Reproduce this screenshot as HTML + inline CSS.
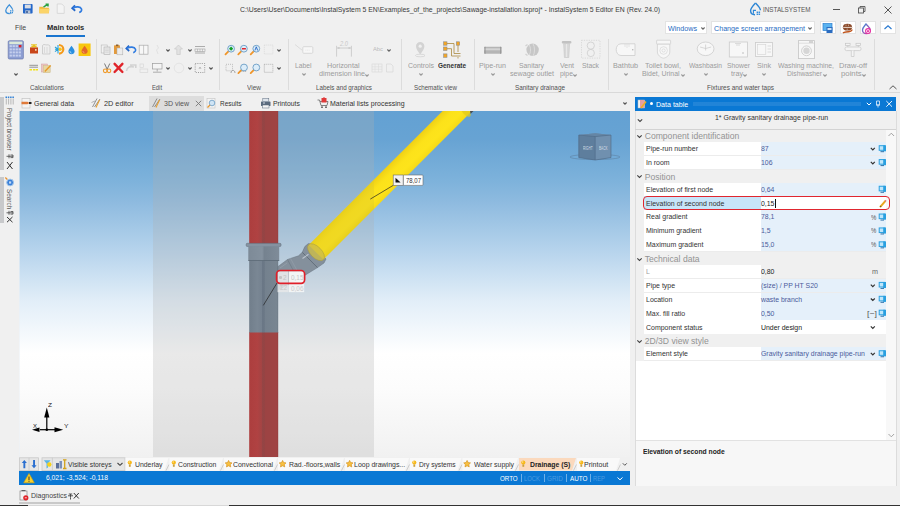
<!DOCTYPE html>
<html><head><meta charset="utf-8"><style>
html,body{margin:0;padding:0;}
body{width:900px;height:506px;overflow:hidden;position:relative;background:#f0f0f0;font-family:"Liberation Sans", sans-serif;}
.t{position:absolute;white-space:pre;transform-origin:0 50%;}
.a{position:absolute;}
svg{position:absolute;overflow:visible;}
</style></head><body>
<div class="t" style="left:239.60px;top:5.63px;font-size:8px;line-height:8px;color:#3a3a3a;transform:scaleX(0.856);">C:\Users\User\Documents\InstalSystem 5 EN\Examples_of_the_projects\Sawage-installation.isproj* - InstalSystem 5 Editor EN (Rev. 24.0)</div><div class="t" style="left:763.20px;top:5.97px;font-size:7px;line-height:7px;color:#555;transform:scaleX(0.900);">INSTALSYSTEM</div><div class="a" style="left:833px;top:9px;width:7px;height:0.9px;background:#555"></div><svg style="left:858px;top:5.5px" width="8" height="8"><rect x="0.5" y="2" width="5" height="5" fill="none" stroke="#555" stroke-width="0.9"/><path d="M2 2V0.5H7V5.5H5.5" fill="none" stroke="#555" stroke-width="0.9"/></svg><svg style="left:883.5px;top:5.5px" width="8" height="8"><path d="M0.5 0.5L7.5 7.5M7.5 0.5L0.5 7.5" stroke="#444" stroke-width="0.9"/></svg><div class="t" style="left:14.90px;top:23.63px;font-size:8px;line-height:8px;color:#444;transform:scaleX(0.861);">File</div><div class="t" style="left:46.90px;top:23.63px;font-size:8px;line-height:8px;color:#2a2a2a;font-weight:700;transform:scaleX(0.943);">Main tools</div><div class="a" style="left:46px;top:34.5px;width:39px;height:2px;background:#1a75cf"></div><div class="a" style="left:665px;top:21px;width:42px;height:13px;background:#fff;border:1px solid #e3e3e3;box-sizing:border-box"></div><div class="t" style="left:668.30px;top:24.53px;font-size:8px;line-height:8px;color:#1f6cc2;transform:scaleX(0.894);">Windows</div><div class="a" style="left:711px;top:21px;width:104px;height:13px;background:#fff;border:1px solid #e3e3e3;box-sizing:border-box"></div><div class="t" style="left:714.00px;top:24.53px;font-size:8px;line-height:8px;color:#1f6cc2;transform:scaleX(0.894);">Change screen arrangement</div><div class="a" style="left:820px;top:21px;width:15.5px;height:13px;background:#fff;border:1px solid #e3e3e3;box-sizing:border-box"></div><div class="a" style="left:840px;top:21px;width:15.5px;height:13px;background:#fff;border:1px solid #e3e3e3;box-sizing:border-box"></div><div class="a" style="left:860px;top:21px;width:15.5px;height:13px;background:#fff;border:1px solid #e3e3e3;box-sizing:border-box"></div><div class="a" style="left:880px;top:21px;width:15.5px;height:13px;background:#fff;border:1px solid #e3e3e3;box-sizing:border-box"></div><svg style="left:700.5px;top:27.2px" width="4" height="3"><path d="M0.4 0.5L2 2.1L3.6 0.5" fill="none" stroke="#666" stroke-width="1.15"/></svg><svg style="left:808.0px;top:27.2px" width="4" height="3"><path d="M0.4 0.5L2 2.1L3.6 0.5" fill="none" stroke="#666" stroke-width="1.15"/></svg><svg style="left:884px;top:25px" width="8" height="5"><path d="M0.5 4L4 0.8L7.5 4" fill="none" stroke="#2a7ad0" stroke-width="1.2"/></svg><div class="a" style="left:0;top:92px;width:900px;height:1px;background:#d9d9d9"></div><div class="a" style="left:95.5px;top:39px;width:1px;height:51px;background:#dcdcdc"></div><div class="a" style="left:219.3px;top:39px;width:1px;height:51px;background:#dcdcdc"></div><div class="a" style="left:288.0px;top:39px;width:1px;height:51px;background:#dcdcdc"></div><div class="a" style="left:401.0px;top:39px;width:1px;height:51px;background:#dcdcdc"></div><div class="a" style="left:473.7px;top:39px;width:1px;height:51px;background:#dcdcdc"></div><div class="a" style="left:607.5px;top:39px;width:1px;height:51px;background:#dcdcdc"></div><div class="a" style="left:874.0px;top:39px;width:1px;height:51px;background:#dcdcdc"></div><div class="t" style="left:30.00px;top:83.95px;font-size:7.5px;line-height:7.5px;color:#505050;transform:scaleX(0.832);">Calculations</div><div class="t" style="left:152.00px;top:83.95px;font-size:7.5px;line-height:7.5px;color:#505050;transform:scaleX(0.773);">Edit</div><div class="t" style="left:247.00px;top:83.95px;font-size:7.5px;line-height:7.5px;color:#505050;transform:scaleX(0.868);">View</div><div class="t" style="left:316.00px;top:83.95px;font-size:7.5px;line-height:7.5px;color:#505050;transform:scaleX(0.834);">Labels and graphics</div><div class="t" style="left:414.00px;top:83.95px;font-size:7.5px;line-height:7.5px;color:#505050;transform:scaleX(0.825);">Schematic view</div><div class="t" style="left:515.00px;top:83.95px;font-size:7.5px;line-height:7.5px;color:#505050;transform:scaleX(0.850);">Sanitary drainage</div><div class="t" style="left:707.00px;top:83.95px;font-size:7.5px;line-height:7.5px;color:#505050;transform:scaleX(0.859);">Fixtures and water taps</div><div class="t" style="left:295.25px;top:61.65px;font-size:7.5px;line-height:7.5px;color:#9c9c9c;transform:scaleX(0.899);">Label</div><svg style="left:302.0px;top:73.0px" width="4" height="3"><path d="M0.4 0.5L2 2.1L3.6 0.5" fill="none" stroke="#999" stroke-width="1.15"/></svg><div class="t" style="left:327.45px;top:61.65px;font-size:7.5px;line-height:7.5px;color:#9c9c9c;transform:scaleX(0.963);">Horizontal</div><div class="t" style="left:319.00px;top:69.95px;font-size:7.5px;line-height:7.5px;color:#9c9c9c;transform:scaleX(0.959);">dimension line</div><svg style="left:365.0px;top:74.0px" width="4" height="3"><path d="M0.4 0.5L2 2.1L3.6 0.5" fill="none" stroke="#999" stroke-width="1.15"/></svg><div class="t" style="left:408.00px;top:61.65px;font-size:7.5px;line-height:7.5px;color:#9c9c9c;transform:scaleX(0.931);">Controls</div><svg style="left:419.0px;top:73.0px" width="4" height="3"><path d="M0.4 0.5L2 2.1L3.6 0.5" fill="none" stroke="#999" stroke-width="1.15"/></svg><div class="t" style="left:438.00px;top:61.65px;font-size:7.5px;line-height:7.5px;color:#333;font-weight:700;transform:scaleX(0.861);">Generate</div><div class="t" style="left:479.00px;top:61.65px;font-size:7.5px;line-height:7.5px;color:#9c9c9c;transform:scaleX(0.952);">Pipe-run</div><svg style="left:490.5px;top:73.0px" width="4" height="3"><path d="M0.4 0.5L2 2.1L3.6 0.5" fill="none" stroke="#999" stroke-width="1.15"/></svg><div class="t" style="left:519.00px;top:61.65px;font-size:7.5px;line-height:7.5px;color:#9c9c9c;transform:scaleX(0.909);">Sanitary</div><div class="t" style="left:510.00px;top:69.95px;font-size:7.5px;line-height:7.5px;color:#9c9c9c;transform:scaleX(0.950);">sewage outlet</div><div class="t" style="left:560.00px;top:61.65px;font-size:7.5px;line-height:7.5px;color:#9c9c9c;transform:scaleX(0.932);">Vent</div><div class="t" style="left:559.50px;top:69.95px;font-size:7.5px;line-height:7.5px;color:#9c9c9c;transform:scaleX(0.916);">pipe</div><svg style="left:573.0px;top:74.0px" width="4" height="3"><path d="M0.4 0.5L2 2.1L3.6 0.5" fill="none" stroke="#999" stroke-width="1.15"/></svg><div class="t" style="left:582.00px;top:61.65px;font-size:7.5px;line-height:7.5px;color:#9c9c9c;transform:scaleX(0.906);">Stack</div><div class="t" style="left:613.00px;top:61.65px;font-size:7.5px;line-height:7.5px;color:#9c9c9c;transform:scaleX(0.967);">Bathtub</div><svg style="left:623.5px;top:73.0px" width="4" height="3"><path d="M0.4 0.5L2 2.1L3.6 0.5" fill="none" stroke="#999" stroke-width="1.15"/></svg><div class="t" style="left:645.00px;top:61.65px;font-size:7.5px;line-height:7.5px;color:#9c9c9c;transform:scaleX(0.970);">Toilet bowl,</div><div class="t" style="left:641.75px;top:69.95px;font-size:7.5px;line-height:7.5px;color:#9c9c9c;transform:scaleX(0.918);">Bidet, Urinal</div><svg style="left:681.0px;top:74.0px" width="4" height="3"><path d="M0.4 0.5L2 2.1L3.6 0.5" fill="none" stroke="#999" stroke-width="1.15"/></svg><div class="t" style="left:689.00px;top:61.65px;font-size:7.5px;line-height:7.5px;color:#9c9c9c;transform:scaleX(0.896);">Washbasin</div><svg style="left:703.5px;top:73.0px" width="4" height="3"><path d="M0.4 0.5L2 2.1L3.6 0.5" fill="none" stroke="#999" stroke-width="1.15"/></svg><div class="t" style="left:727.00px;top:61.65px;font-size:7.5px;line-height:7.5px;color:#9c9c9c;transform:scaleX(0.904);">Shower</div><div class="t" style="left:730.50px;top:69.95px;font-size:7.5px;line-height:7.5px;color:#9c9c9c;transform:scaleX(0.959);">tray</div><svg style="left:743.0px;top:74.0px" width="4" height="3"><path d="M0.4 0.5L2 2.1L3.6 0.5" fill="none" stroke="#999" stroke-width="1.15"/></svg><div class="t" style="left:757.00px;top:61.65px;font-size:7.5px;line-height:7.5px;color:#9c9c9c;transform:scaleX(0.959);">Sink</div><svg style="left:762.0px;top:73.0px" width="4" height="3"><path d="M0.4 0.5L2 2.1L3.6 0.5" fill="none" stroke="#999" stroke-width="1.15"/></svg><div class="t" style="left:778.00px;top:61.65px;font-size:7.5px;line-height:7.5px;color:#9c9c9c;transform:scaleX(0.912);">Washing machine,</div><div class="t" style="left:786.70px;top:69.95px;font-size:7.5px;line-height:7.5px;color:#9c9c9c;transform:scaleX(0.893);">Dishwasher</div><svg style="left:823.0px;top:74.0px" width="4" height="3"><path d="M0.4 0.5L2 2.1L3.6 0.5" fill="none" stroke="#999" stroke-width="1.15"/></svg><div class="t" style="left:839.00px;top:61.65px;font-size:7.5px;line-height:7.5px;color:#9c9c9c;transform:scaleX(0.993);">Draw-off</div><div class="t" style="left:840.95px;top:69.95px;font-size:7.5px;line-height:7.5px;color:#9c9c9c;transform:scaleX(1.034);">points</div><svg style="left:862.0px;top:74.0px" width="4" height="3"><path d="M0.4 0.5L2 2.1L3.6 0.5" fill="none" stroke="#999" stroke-width="1.15"/></svg><div class="t" style="left:373.00px;top:46.42px;font-size:6px;line-height:6px;color:#bbb;transform:scaleX(0.967);">Abc</div><svg style="left:387.0px;top:48.5px" width="4" height="3"><path d="M0.4 0.5L2 2.1L3.6 0.5" fill="none" stroke="#666" stroke-width="1.15"/></svg><svg style="left:14.0px;top:73.0px" width="4" height="3"><path d="M0.4 0.5L2 2.1L3.6 0.5" fill="none" stroke="#555" stroke-width="1.15"/></svg><svg style="left:889px;top:85px" width="8" height="5"><path d="M0.5 4L4 0.8L7.5 4" fill="none" stroke="#555" stroke-width="1"/></svg><div class="a" style="left:0;top:96.5px;width:3.5px;height:73px;background:#c8c9cb"></div><div class="a" style="left:0;top:177px;width:3.5px;height:46px;background:#c8c9cb"></div><div class="a" style="left:149px;top:96px;width:55px;height:15px;background:#dddddd"></div><div class="t" style="left:33.90px;top:100.23px;font-size:8px;line-height:8px;color:#333;transform:scaleX(0.865);">General data</div><div class="t" style="left:104.30px;top:100.23px;font-size:8px;line-height:8px;color:#333;transform:scaleX(0.912);">2D editor</div><div class="t" style="left:164.30px;top:100.23px;font-size:8px;line-height:8px;color:#555;transform:scaleX(0.882);">3D view</div><svg style="left:195px;top:100.3px" width="7" height="7"><path d="M0.8 0.8L6.2 6.2M6.2 0.8L0.8 6.2" stroke="#777" stroke-width="0.9"/></svg><div class="t" style="left:219.60px;top:100.23px;font-size:8px;line-height:8px;color:#333;transform:scaleX(0.802);">Results</div><div class="t" style="left:272.60px;top:100.23px;font-size:8px;line-height:8px;color:#333;transform:scaleX(0.852);">Printouts</div><div class="t" style="left:329.60px;top:100.23px;font-size:8px;line-height:8px;color:#333;transform:scaleX(0.874);">Material lists processing</div><svg style="left:623.0px;top:102.0px" width="4" height="3"><path d="M0.4 0.5L2 2.1L3.6 0.5" fill="none" stroke="#555" stroke-width="1.15"/></svg><div class="a" style="left:19px;top:111px;width:611px;height:346px;background:linear-gradient(to bottom,#63a1d3 0%,#67a3d3 8%,#7db2db 20%,#8dbadf 26%,#b5d3ec 40%,#e2eef8 55%,#ffffff 70%,#fcfcfc 80%,#f1f1f1 100%)"></div><div class="a" style="left:19px;top:111px;width:1px;height:346px;background:rgba(235,240,245,0.6)"></div><div class="a" style="left:153px;top:111px;width:221px;height:346px;background:rgba(175,175,175,0.28)"></div><div class="a" style="left:19px;top:457.5px;width:611px;height:13.5px;background:#f0f0f0"></div><div class="a" style="left:19px;top:471px;width:611px;height:14px;background:#0a78d4"></div><div class="t" style="left:46.00px;top:474.23px;font-size:8px;line-height:8px;color:#fff;transform:scaleX(0.841);">6,021; -3,524; -0,118</div><div class="t" style="left:500.00px;top:474.65px;font-size:7.5px;line-height:7.5px;color:#fff;transform:scaleX(0.827);">ORTO</div><div class="t" style="left:524.00px;top:474.65px;font-size:7.5px;line-height:7.5px;color:#4d9be0;transform:scaleX(0.783);">LOCK</div><div class="t" style="left:547.00px;top:474.65px;font-size:7.5px;line-height:7.5px;color:#4d9be0;transform:scaleX(0.853);">GRID</div><div class="t" style="left:569.50px;top:474.65px;font-size:7.5px;line-height:7.5px;color:#fff;transform:scaleX(0.845);">AUTO</div><div class="t" style="left:593.00px;top:474.65px;font-size:7.5px;line-height:7.5px;color:#4d9be0;transform:scaleX(0.778);">REP</div><div class="a" style="left:521px;top:473.5px;width:1px;height:8px;background:#6fb0e8"></div><div class="a" style="left:543.5px;top:473.5px;width:1px;height:8px;background:#6fb0e8"></div><div class="a" style="left:566px;top:473.5px;width:1px;height:8px;background:#6fb0e8"></div><div class="a" style="left:590px;top:473.5px;width:1px;height:8px;background:#6fb0e8"></div><svg style="left:616.5px;top:476.8px" width="6" height="4"><path d="M0.5 0.5L3 2.8L5.5 0.5" fill="none" stroke="#fff" stroke-width="1"/></svg><div class="t" style="left:31.00px;top:491.73px;font-size:8px;line-height:8px;color:#444;transform:scaleX(0.870);">Diagnostics</div><div class="a" style="left:19px;top:501.5px;width:61px;height:2.5px;background:#c9c9c9"></div><div class="a" style="left:229px;top:505px;width:671px;height:1px;background:#333"></div><div class="a" style="left:0;top:505px;width:229px;height:1px;background:#d8d8d8"></div><div class="a" style="left:0;top:505px;width:28px;height:1px;background:#333"></div><div class="a" style="left:635px;top:97px;width:261px;height:14px;background:#0a78d4"></div><div class="t" style="left:655.70px;top:101.03px;font-size:8px;line-height:8px;color:#fff;transform:scaleX(0.883);">Data table</div><div class="a" style="left:649.5px;top:102px;width:3px;height:3px;border-radius:50%;background:#fff"></div><div class="a" style="left:693px;top:102px;width:168px;height:4px;background-image:radial-gradient(circle,#3b92dc 0.5px,transparent 0.9px);background-size:2px 2px"></div><div class="a" style="left:634.5px;top:111px;width:262px;height:375px;border:1px solid #dcdcdc;border-top:none;box-sizing:border-box;background:#f0f0f0"></div><div class="t" style="left:714.80px;top:114.23px;font-size:8px;line-height:8px;color:#333;transform:scaleX(0.869);">1* Gravity sanitary drainage pipe-run</div><div class="a" style="left:635px;top:129px;width:261px;height:1px;background:#d5d5d5"></div><div class="a" style="left:635.5px;top:130px;width:250.5px;height:310px;background:#ffffff"></div><div class="a" style="left:886px;top:130px;width:10px;height:310px;background:#f8f8f8"></div><div class="a" style="left:635.5px;top:440px;width:260.5px;height:46px;background:#f7f7f7;border-top:1px solid #e2e2e2;box-sizing:border-box"></div><div class="t" style="left:642.50px;top:447.73px;font-size:8px;line-height:8px;color:#222;font-weight:700;transform:scaleX(0.843);">Elevation of second node</div><div class="a" style="left:635.5px;top:129.20px;width:250.5px;height:12.75px;background:#f0f0f0"></div><div class="t" style="left:644.70px;top:132.02px;font-size:8.6px;line-height:8.6px;color:#939393;">Component identification</div><svg style="left:637px;top:134.70px" width="5" height="3"><path d="M0.3 0.3L2.5 2.5L4.7 0.3" fill="none" stroke="#444" stroke-width="1.1"/></svg><div class="a" style="left:635.5px;top:141.95px;width:8px;height:13.90px;background:#f0f0f0"></div><div class="a" style="left:643.6px;top:141.95px;width:117px;height:13.90px;background:#ffffff"></div><div class="a" style="left:760.5px;top:141.95px;width:125.5px;height:13.90px;background:#e5f0fa"></div><div class="a" style="left:643.6px;top:155.25px;width:242.4px;height:0.6px;background:#ececec"></div><div class="t" style="left:646.00px;top:145.10px;font-size:7.5px;line-height:7.5px;color:#333;transform:scaleX(0.930);">Pipe-run number</div><div class="t" style="left:761.00px;top:145.10px;font-size:7.5px;line-height:7.5px;color:#4b5b9a;transform:scaleX(0.920);">87</div><div class="a" style="left:635.5px;top:155.85px;width:8px;height:13.90px;background:#f0f0f0"></div><div class="a" style="left:643.6px;top:155.85px;width:117px;height:13.90px;background:#ffffff"></div><div class="a" style="left:760.5px;top:155.85px;width:125.5px;height:13.90px;background:#e5f0fa"></div><div class="a" style="left:643.6px;top:169.15px;width:242.4px;height:0.6px;background:#ececec"></div><div class="t" style="left:646.00px;top:159.00px;font-size:7.5px;line-height:7.5px;color:#333;transform:scaleX(0.930);">In room</div><div class="t" style="left:761.00px;top:159.00px;font-size:7.5px;line-height:7.5px;color:#4b5b9a;transform:scaleX(0.920);">106</div><div class="a" style="left:635.5px;top:169.75px;width:250.5px;height:12.75px;background:#f0f0f0"></div><div class="t" style="left:644.70px;top:172.57px;font-size:8.6px;line-height:8.6px;color:#939393;">Position</div><svg style="left:637px;top:175.25px" width="5" height="3"><path d="M0.3 0.3L2.5 2.5L4.7 0.3" fill="none" stroke="#444" stroke-width="1.1"/></svg><div class="a" style="left:635.5px;top:182.50px;width:8px;height:13.90px;background:#f0f0f0"></div><div class="a" style="left:643.6px;top:182.50px;width:117px;height:13.90px;background:#ffffff"></div><div class="a" style="left:760.5px;top:182.50px;width:125.5px;height:13.90px;background:#e5f0fa"></div><div class="a" style="left:643.6px;top:195.80px;width:242.4px;height:0.6px;background:#ececec"></div><div class="t" style="left:646.00px;top:185.65px;font-size:7.5px;line-height:7.5px;color:#333;transform:scaleX(0.930);">Elevation of first node</div><div class="t" style="left:761.00px;top:185.65px;font-size:7.5px;line-height:7.5px;color:#4b5b9a;transform:scaleX(0.920);">0,64</div><div class="a" style="left:635.5px;top:196.40px;width:8px;height:13.90px;background:#f0f0f0"></div><div class="a" style="left:643.6px;top:196.40px;width:117px;height:13.90px;background:#c7e5f9"></div><div class="a" style="left:760.5px;top:196.40px;width:125.5px;height:13.90px;background:#ffffff"></div><div class="a" style="left:643.6px;top:209.70px;width:242.4px;height:0.6px;background:#ececec"></div><div class="t" style="left:646.00px;top:199.55px;font-size:7.5px;line-height:7.5px;color:#333;transform:scaleX(0.930);">Elevation of second node</div><div class="t" style="left:761.00px;top:199.55px;font-size:7.5px;line-height:7.5px;color:#222;transform:scaleX(0.920);">0,15</div><div class="a" style="left:635.5px;top:210.30px;width:8px;height:13.90px;background:#f0f0f0"></div><div class="a" style="left:643.6px;top:210.30px;width:117px;height:13.90px;background:#ffffff"></div><div class="a" style="left:760.5px;top:210.30px;width:125.5px;height:13.90px;background:#e5f0fa"></div><div class="a" style="left:643.6px;top:223.60px;width:242.4px;height:0.6px;background:#ececec"></div><div class="t" style="left:646.00px;top:213.45px;font-size:7.5px;line-height:7.5px;color:#333;transform:scaleX(0.930);">Real gradient</div><div class="t" style="left:761.00px;top:213.45px;font-size:7.5px;line-height:7.5px;color:#4b5b9a;transform:scaleX(0.920);">78,1</div><div class="a" style="left:635.5px;top:224.20px;width:8px;height:13.90px;background:#f0f0f0"></div><div class="a" style="left:643.6px;top:224.20px;width:117px;height:13.90px;background:#ffffff"></div><div class="a" style="left:760.5px;top:224.20px;width:125.5px;height:13.90px;background:#e5f0fa"></div><div class="a" style="left:643.6px;top:237.50px;width:242.4px;height:0.6px;background:#ececec"></div><div class="t" style="left:646.00px;top:227.35px;font-size:7.5px;line-height:7.5px;color:#333;transform:scaleX(0.930);">Minimum gradient</div><div class="t" style="left:761.00px;top:227.35px;font-size:7.5px;line-height:7.5px;color:#4b5b9a;transform:scaleX(0.920);">1,5</div><div class="a" style="left:635.5px;top:238.10px;width:8px;height:13.90px;background:#f0f0f0"></div><div class="a" style="left:643.6px;top:238.10px;width:117px;height:13.90px;background:#ffffff"></div><div class="a" style="left:760.5px;top:238.10px;width:125.5px;height:13.90px;background:#e5f0fa"></div><div class="a" style="left:643.6px;top:251.40px;width:242.4px;height:0.6px;background:#ececec"></div><div class="t" style="left:646.00px;top:241.25px;font-size:7.5px;line-height:7.5px;color:#333;transform:scaleX(0.930);">Maximum gradient</div><div class="t" style="left:761.00px;top:241.25px;font-size:7.5px;line-height:7.5px;color:#4b5b9a;transform:scaleX(0.920);">15,0</div><div class="a" style="left:635.5px;top:252.00px;width:250.5px;height:12.75px;background:#f0f0f0"></div><div class="t" style="left:644.70px;top:254.82px;font-size:8.6px;line-height:8.6px;color:#939393;">Technical data</div><svg style="left:637px;top:257.50px" width="5" height="3"><path d="M0.3 0.3L2.5 2.5L4.7 0.3" fill="none" stroke="#444" stroke-width="1.1"/></svg><div class="a" style="left:635.5px;top:264.75px;width:8px;height:13.90px;background:#f0f0f0"></div><div class="a" style="left:643.6px;top:264.75px;width:117px;height:13.90px;background:#ffffff"></div><div class="a" style="left:760.5px;top:264.75px;width:125.5px;height:13.90px;background:#f0f0f0"></div><div class="a" style="left:643.6px;top:278.05px;width:242.4px;height:0.6px;background:#ececec"></div><div class="t" style="left:646.00px;top:267.90px;font-size:7.5px;line-height:7.5px;color:#a0a0a0;transform:scaleX(0.930);">L</div><div class="t" style="left:761.00px;top:267.90px;font-size:7.5px;line-height:7.5px;color:#222;transform:scaleX(0.920);">0,80</div><div class="a" style="left:635.5px;top:278.65px;width:8px;height:13.90px;background:#f0f0f0"></div><div class="a" style="left:643.6px;top:278.65px;width:117px;height:13.90px;background:#ffffff"></div><div class="a" style="left:760.5px;top:278.65px;width:125.5px;height:13.90px;background:#e5f0fa"></div><div class="a" style="left:643.6px;top:291.95px;width:242.4px;height:0.6px;background:#ececec"></div><div class="t" style="left:646.00px;top:281.80px;font-size:7.5px;line-height:7.5px;color:#333;transform:scaleX(0.930);">Pipe type</div><div class="t" style="left:761.00px;top:281.80px;font-size:7.5px;line-height:7.5px;color:#4b5b9a;transform:scaleX(0.920);">(size) / PP HT S20</div><div class="a" style="left:635.5px;top:292.55px;width:8px;height:13.90px;background:#f0f0f0"></div><div class="a" style="left:643.6px;top:292.55px;width:117px;height:13.90px;background:#ffffff"></div><div class="a" style="left:760.5px;top:292.55px;width:125.5px;height:13.90px;background:#e5f0fa"></div><div class="a" style="left:643.6px;top:305.85px;width:242.4px;height:0.6px;background:#ececec"></div><div class="t" style="left:646.00px;top:295.70px;font-size:7.5px;line-height:7.5px;color:#333;transform:scaleX(0.930);">Location</div><div class="t" style="left:761.00px;top:295.70px;font-size:7.5px;line-height:7.5px;color:#4b5b9a;transform:scaleX(0.920);">waste branch</div><div class="a" style="left:635.5px;top:306.45px;width:8px;height:13.90px;background:#f0f0f0"></div><div class="a" style="left:643.6px;top:306.45px;width:117px;height:13.90px;background:#ffffff"></div><div class="a" style="left:760.5px;top:306.45px;width:125.5px;height:13.90px;background:#e5f0fa"></div><div class="a" style="left:643.6px;top:319.75px;width:242.4px;height:0.6px;background:#ececec"></div><div class="t" style="left:646.00px;top:309.60px;font-size:7.5px;line-height:7.5px;color:#333;transform:scaleX(0.930);">Max. fill ratio</div><div class="t" style="left:761.00px;top:309.60px;font-size:7.5px;line-height:7.5px;color:#4b5b9a;transform:scaleX(0.920);">0,50</div><div class="a" style="left:635.5px;top:320.35px;width:8px;height:13.90px;background:#f0f0f0"></div><div class="a" style="left:643.6px;top:320.35px;width:117px;height:13.90px;background:#ffffff"></div><div class="a" style="left:760.5px;top:320.35px;width:125.5px;height:13.90px;background:#ffffff"></div><div class="a" style="left:643.6px;top:333.65px;width:242.4px;height:0.6px;background:#ececec"></div><div class="t" style="left:646.00px;top:323.50px;font-size:7.5px;line-height:7.5px;color:#333;transform:scaleX(0.930);">Component status</div><div class="t" style="left:761.00px;top:323.50px;font-size:7.5px;line-height:7.5px;color:#222;transform:scaleX(0.920);">Under design</div><div class="a" style="left:635.5px;top:334.25px;width:250.5px;height:12.75px;background:#f0f0f0"></div><div class="t" style="left:644.70px;top:337.07px;font-size:8.6px;line-height:8.6px;color:#939393;">2D/3D view style</div><svg style="left:637px;top:339.75px" width="5" height="3"><path d="M0.3 0.3L2.5 2.5L4.7 0.3" fill="none" stroke="#444" stroke-width="1.1"/></svg><div class="a" style="left:635.5px;top:347.00px;width:8px;height:13.90px;background:#f0f0f0"></div><div class="a" style="left:643.6px;top:347.00px;width:117px;height:13.90px;background:#ffffff"></div><div class="a" style="left:760.5px;top:347.00px;width:125.5px;height:13.90px;background:#e5f0fa"></div><div class="a" style="left:643.6px;top:360.30px;width:242.4px;height:0.6px;background:#ececec"></div><div class="t" style="left:646.00px;top:350.15px;font-size:7.5px;line-height:7.5px;color:#333;transform:scaleX(0.930);">Element style</div><div class="t" style="left:761.00px;top:350.15px;font-size:7.5px;line-height:7.5px;color:#4b5b9a;transform:scaleX(0.920);">Gravity sanitary drainage pipe-run</div><div class="a" style="left:635px;top:128.7px;width:261px;height:1px;background:#d3d3d3"></div><div class="a" style="left:642.5px;top:195.5px;width:247px;height:14.5px;border:1.6px solid #e0262f;border-radius:4px;box-sizing:border-box"></div><svg style="left:0;top:0" width="900" height="506" viewBox="0 0 900 506">
<defs>
<clipPath id="vp"><rect x="19" y="111" width="611" height="346"/></clipPath>
<clipPath id="band"><rect x="153" y="111" width="221" height="346"/></clipPath>
<clipPath id="outb"><rect x="374" y="100" width="300" height="360"/></clipPath>
<linearGradient id="red" x1="0" x2="1" y1="0" y2="0">
<stop offset="0" stop-color="#ac3e3e"/><stop offset="0.28" stop-color="#b04242"/><stop offset="0.43" stop-color="#a34444"/><stop offset="0.45" stop-color="#954545"/><stop offset="0.52" stop-color="#944444"/><stop offset="0.56" stop-color="#9c4343"/><stop offset="0.94" stop-color="#a04343"/><stop offset="1" stop-color="#963f3f"/>
</linearGradient>
<linearGradient id="gray" x1="0" x2="1" y1="0" y2="0">
<stop offset="0" stop-color="#717e8b"/><stop offset="0.28" stop-color="#7a8794"/><stop offset="0.43" stop-color="#758290"/><stop offset="0.45" stop-color="#6a7786"/><stop offset="0.52" stop-color="#6b7886"/><stop offset="0.56" stop-color="#74818e"/><stop offset="0.94" stop-color="#788591"/><stop offset="1" stop-color="#6f7c88"/>
</linearGradient>
<linearGradient id="grayl" x1="0" x2="1" y1="0" y2="0">
<stop offset="0" stop-color="#7d8a97"/><stop offset="0.45" stop-color="#84919e"/><stop offset="0.52" stop-color="#75828f"/><stop offset="1" stop-color="#7f8c99"/>
</linearGradient>
<linearGradient id="yel" gradientUnits="userSpaceOnUse" x1="442.6" y1="111" x2="457.3" y2="125.7">
<stop offset="0" stop-color="#efd016"/><stop offset="0.35" stop-color="#fce21a"/><stop offset="0.7" stop-color="#fde41b"/><stop offset="1" stop-color="#f6da16"/>
</linearGradient>
<linearGradient id="yeld" gradientUnits="userSpaceOnUse" x1="442.6" y1="111" x2="457.3" y2="125.7">
<stop offset="0" stop-color="#e8cf1c"/><stop offset="0.35" stop-color="#f0d820"/><stop offset="0.7" stop-color="#f0d922"/><stop offset="1" stop-color="#e8d01c"/>
</linearGradient>
</defs>
<g clip-path="url(#vp)">
<!-- red pipe -->
<rect x="249.2" y="100" width="29" height="144" fill="url(#red)"/>
<rect x="249.2" y="332" width="29" height="130" fill="url(#red)"/>
<!-- gray main pipe -->
<rect x="249.2" y="260" width="29" height="72.5" fill="url(#gray)"/>
<!-- branch fitting -->
<path d="M278 266.5 L287.5 259.5 L290.5 258.4 L298.5 255.8 L302.3 252.3 L304.8 246.6 L308.3 243.6 L312 244.2 L326 259 L324 263 L317.5 267.6 L305 275.2 L290 283.5 L278 290 Z" fill="#84909c" stroke="#66727e" stroke-width="0.5"/>
<path d="M302.3 252.3 L317.5 267.6" stroke="#5f6b77" stroke-width="0.9" fill="none"/>
<path d="M287.5 259.5 L296.5 276.5" stroke="#6c7884" stroke-width="0.7" fill="none"/>
<path d="M290.5 258.4 L299.5 275" stroke="#9aa5b0" stroke-width="0.5" fill="none"/>
<path d="M302.5 258.5 L308.5 254.3" stroke="#c0c9d2" stroke-width="1.1" fill="none" opacity="0.9"/>
<path d="M280 268 L287 263" stroke="#a0abb6" stroke-width="0.8" fill="none" opacity="0.6"/>
<!-- socket collar -->
<rect x="246.2" y="243.3" width="34.8" height="3.2" fill="#8592a0" stroke="#5e6b78" stroke-width="0.5" rx="1"/>
<rect x="248.3" y="246.5" width="30.9" height="14.2" fill="url(#grayl)"/>
<line x1="248.3" y1="260.5" x2="279.2" y2="260.5" stroke="#5b6875" stroke-width="0.8"/>
<!-- yellow pipe -->
<g clip-path="url(#band)">
<path d="M308.7 244.9 L471 82.6 L485.7 97.3 L323.4 259.6 Z" fill="url(#yeld)"/>
</g>
<g clip-path="url(#outb)">
<path d="M308.7 244.9 L471 82.6 L485.7 97.3 L323.4 259.6 Z" fill="url(#yel)"/>
</g>
<path d="M470 111 L473.5 111 L470.5 114 Z" fill="#444c55"/>
<ellipse cx="466" cy="112" rx="6" ry="3" transform="rotate(45 466 112)" fill="#e0c81c" opacity="0.7"/>
<ellipse cx="316" cy="252.2" rx="10.6" ry="5.6" transform="rotate(45 316 252.2)" fill="#cdbd4a" fill-opacity="0.8" stroke="#a89a3e" stroke-width="0.5"/>
<!-- dimension leader on yellow pipe -->
<line x1="370.3" y1="199.1" x2="393.5" y2="185.2" stroke="#222" stroke-width="0.7"/>
<!-- e2 leader -->
<line x1="263.3" y1="305.4" x2="277" y2="283" stroke="#222" stroke-width="0.7"/>
</g>
<!-- dimension label 78,07 -->
<rect x="393.2" y="175" width="10" height="10.4" fill="#f2f2f2" stroke="#6a6a6a" stroke-width="0.6"/>
<rect x="403.4" y="175" width="19.6" height="10.4" fill="#ffffff" stroke="#6a6a6a" stroke-width="0.6" rx="0.8"/>
<path d="M395.5 177.8 L395.5 182.6 L400.6 182.6 Z" fill="#111"/>
<!-- e2 label -->
<rect x="277.5" y="271.2" width="11" height="12" fill="#e6e7e9" fill-opacity="0.95"/>
<rect x="288.8" y="271.2" width="15.4" height="12" fill="#f7f8f8" fill-opacity="0.97"/>
<rect x="277.5" y="283.6" width="11" height="8.6" fill="#e6e7e9" fill-opacity="0.85"/>
<rect x="288.8" y="283.6" width="15.4" height="8.6" fill="#f7f8f8" fill-opacity="0.85"/>
<rect x="276.6" y="270.5" width="28" height="12.8" rx="3.5" fill="none" stroke="#e0202a" stroke-width="1.7"/>
<!-- nav cube -->
<ellipse cx="595" cy="157" rx="25" ry="2.6" fill="none" stroke="#5c7c9c" stroke-width="0.9" opacity="0.6"/>
<path d="M578.8 135 L595.2 133.3 L611 135 L611 157.6 L595.2 160 L578.8 157.6 Z" fill="#6a8aa9"/>
<path d="M578.8 135 L595.2 136.6 L595.2 160 L578.8 157.6 Z" fill="#5e7e9d"/>
<path d="M595.2 136.6 L611 135 L611 157.6 L595.2 160 Z" fill="#7090af"/>
<path d="M578.8 135 L595.2 133.3 L611 135 L595.2 136.6 Z" fill="#6586a5"/>
<path d="M578.8 135 L595.2 136.6 L611 135 M595.2 136.6 L595.2 160 M578.8 135 L578.8 157.6 L595.2 160 L611 157.6 L611 135" fill="none" stroke="#4d6885" stroke-width="0.6"/>
<!-- axes -->
<g stroke="#000" fill="#000">
<line x1="46.8" y1="417" x2="46.8" y2="429.7" stroke-width="1.2"/>
<path d="M44.2 417.5 L46.8 407.4 L49.4 417.5 Z" stroke="none"/>
<line x1="40" y1="429.7" x2="55" y2="429.7" stroke-width="1.2"/>
<path d="M54.5 427.2 L63.2 429.7 L54.5 432.2 Z" stroke="none"/>
<path d="M39.5 427.5 L32 429.7 L39.5 432 Z" stroke="none"/>
<circle cx="46.8" cy="429.7" r="1.3" stroke="none"/>
</g>
</svg><div class="t" style="left:48.30px;top:402.32px;font-size:6px;line-height:6px;color:#222;transform:scaleX(1.089);">Z</div><div class="t" style="left:64.00px;top:423.42px;font-size:6px;line-height:6px;color:#222;transform:scaleX(1.121);">Y</div><div class="t" style="left:33.00px;top:423.42px;font-size:6px;line-height:6px;color:#222;transform:scaleX(0.996);">X</div><div class="t" style="left:406.00px;top:177.47px;font-size:7px;line-height:7px;color:#333;transform:scaleX(0.856);">78,07</div><div class="t" style="left:282.60px;top:275.00px;font-size:6.5px;line-height:6.5px;color:#c4c4c4;transform:scaleX(0.993);">2</div><div class="a" style="left:279.4px;top:276px;width:2.6px;height:2.6px;border-radius:50%;background:#c4c4c4"></div><div class="t" style="left:290.50px;top:274.45px;font-size:7.5px;line-height:7.5px;color:#c6c6c6;transform:scaleX(0.856);">0,15</div><div class="t" style="left:279.50px;top:285.00px;font-size:6.5px;line-height:6.5px;color:#c8c8c8;transform:scaleX(0.916);">Σ2</div><div class="t" style="left:290.50px;top:284.65px;font-size:7.5px;line-height:7.5px;color:#cbcbcb;transform:scaleX(0.856);">0,06</div><div class="t" style="left:582.50px;top:145.64px;font-size:5.5px;line-height:5.5px;color:#d5dde6;transform:scaleX(0.555);">RIGHT</div><div class="t" style="left:599.00px;top:145.64px;font-size:5.5px;line-height:5.5px;color:#d5dde6;transform:scaleX(0.567);">BACK</div><svg style="left:0;top:0" width="100" height="20">
<path d="M9.3 4.8 C7.5 7 5.8 8.6 5.8 10.4 C5.8 12.3 7.4 13.5 9.3 13.5 C11.2 13.5 12.8 12.3 12.8 10.4 C12.8 8.6 11.1 7 9.3 4.8 Z" fill="none" stroke="#3b8fd9" stroke-width="1.3"/>
<rect x="9.5" y="9.8" width="3.6" height="3.6" fill="#f0f0f0"/>
<path d="M10 10.3h1.2v1.2H10zM11.8 10.3h1.2v1.2h-1.2zM10 12.1h1.2v1.2H10zM11.8 12.1h1.2v1.2h-1.2z" fill="#3b8fd9"/>
<rect x="23" y="4" width="9.6" height="9.6" rx="0.8" fill="#2467c9"/>
<rect x="24.8" y="4.6" width="6" height="3.8" fill="#d9dde4"/>
<rect x="25.3" y="10.3" width="5" height="3.3" fill="#b9c4d4"/>
<rect x="26.3" y="11" width="1.4" height="2" fill="#2a4f8f"/>
<path d="M39.3 6.8h3.6l1 1h5v5.4h-9.6z" fill="#f0b93a"/>
<path d="M39.3 8.8h10.3l-0.8 4.4h-9.5z" fill="#fbd469"/>
<path d="M43.5 7.2 L47.8 4.2 M45.6 4.2 h2.4 v2.4" fill="none" stroke="#2aa143" stroke-width="1.5"/>
<path d="M57.2 4 h4.6 l2.4 2.4 v7 h-7 z" fill="#f4f4f4" stroke="#d0d0d0" stroke-width="0.7"/>
<path d="M75 5.3 L72.2 8.2 L75.2 10.8" fill="none" stroke="#2467c9" stroke-width="1.8"/>
<path d="M73 8.2 C76 6.3 80.5 6.3 81.5 9 C82 10.6 80.8 12 79.2 12.4" fill="none" stroke="#2f7be0" stroke-width="1.7"/>
</svg><svg style="left:745px;top:0" width="20" height="18">
<path d="M10.5 3 C8 5.6 5.6 7.8 5.6 10.6 C5.6 13.2 7.4 14.8 10 14.8" fill="none" stroke="#2d86d5" stroke-width="1.4"/>
<path d="M10.5 3 C13 5.6 15.4 7.8 15.4 10.3" fill="none" stroke="#2d86d5" stroke-width="1.4"/>
<path d="M8.4 13.8 V10.4 H11" fill="none" stroke="#2d86d5" stroke-width="1.1"/>
<path d="M11.6 11.4h1.5v1.5h-1.5zM13.6 11.4h1.5v1.5h-1.5zM11.6 13.4h1.5v1.5h-1.5zM13.6 13.4h1.5v1.5h-1.5z" fill="#3a8fdc"/>
</svg><svg style="left:819px;top:21px" width="80" height="14">
<rect x="4" y="2.5" width="9" height="7" fill="#5bb3f0" stroke="#2b7fd0" stroke-width="0.7"/>
<rect x="7.5" y="6" width="6" height="6" fill="#2b6cc0"/>
<rect x="8.5" y="7" width="4" height="2" fill="#cfe3f7"/>
<ellipse cx="28.5" cy="6.2" rx="4.6" ry="3.4" fill="#8a4a2a"/>
<path d="M24.2 6.4 h8.8" stroke="#f4e8e0" stroke-width="0.9"/>
<path d="M27 3.5 v1.6 M29.5 3.5 v1.6 M28.2 7.5 v1.5" stroke="#d9b8a6" stroke-width="0.7"/>
<path d="M33 8.5 C33 10.5 30 10.8 27 11 C25.5 11.1 24.5 11.5 24 12" fill="none" stroke="#c0561e" stroke-width="1.5"/>
<defs><linearGradient id="dg" x1="0" y1="0" x2="1" y2="1"><stop offset="0" stop-color="#2f8fd8"/><stop offset="1" stop-color="#e52fa0"/></linearGradient></defs>
<path d="M47 3 C45 5.5 43.5 7 43.5 9 C43.5 11.2 45.3 12.5 47.3 12.5 C49.5 12.5 51.3 11.2 51.3 9 C51.3 7 49.3 5.5 47 3 Z" fill="none" stroke="url(#dg)" stroke-width="1.3"/>
<circle cx="49" cy="10" r="2.4" fill="#fff" stroke="#e52fa0" stroke-width="1.1"/>
<rect x="48" y="9.3" width="2" height="1.6" fill="#e52fa0"/>
</svg><svg style="left:0;top:36px" width="96" height="40">
<rect x="8.2" y="4.7" width="15.2" height="18.3" rx="1.2" fill="#8d9ed3" stroke="#6a79ae" stroke-width="0.7"/>
<rect x="9.3" y="5.6" width="13" height="2.6" fill="#dbe9d8"/>
<g fill="#c5cfee">
<rect x="9.6" y="9.2" width="2.3" height="2"/><rect x="12.6" y="9.2" width="2.3" height="2"/><rect x="15.6" y="9.2" width="2.3" height="2"/>
<rect x="9.6" y="12.4" width="2.3" height="2"/><rect x="12.6" y="12.4" width="2.3" height="2"/><rect x="15.6" y="12.4" width="2.3" height="2"/><rect x="18.6" y="12.4" width="2.3" height="2"/>
<rect x="9.6" y="15.4" width="2.3" height="2"/><rect x="12.6" y="15.4" width="2.3" height="2"/><rect x="15.6" y="15.4" width="2.3" height="2"/><rect x="18.6" y="15.4" width="2.3" height="2"/>
<rect x="9.6" y="18.6" width="2.3" height="2"/><rect x="12.6" y="18.6" width="2.3" height="2"/><rect x="15.6" y="18.6" width="2.3" height="2"/><rect x="18.6" y="18.6" width="2.3" height="2"/>
</g>
<rect x="18.8" y="9" width="2.6" height="2.4" fill="#d8232a"/>
<path d="M30 11.5 L34 8.5 L38 11.5 Z" fill="#e9c41f"/>
<rect x="30" y="11.5" width="8" height="6" fill="#c9461a"/>
<rect x="35" y="13" width="1.6" height="1.8" fill="#f1d7b0"/>
<path d="M31 8.8h6" stroke="#e9c41f" stroke-width="1"/>
<path d="M42.5 9.5 C43 8.3 45 8.3 46 9 C47.3 8.5 49.5 8.8 50 10 V18 H42.5 Z" fill="#eeeeee" stroke="#c2c2c2" stroke-width="0.7"/>
<path d="M44.5 11v6M47 11v6" stroke="#cfcfcf" stroke-width="0.6"/>
<path d="M59 9 A4.3 4.3 0 0 1 59 17.6" fill="none" stroke="#f59a1a" stroke-width="2.2"/>
<circle cx="60" cy="13.3" r="1.8" fill="#f5c21a"/>
<path d="M58 9 V17.6 M55 11 L58 13.3 L55 15.6 M58 13.3 H55" fill="none" stroke="#2aa3dc" stroke-width="1.1"/>
<path d="M71.5 9.8 C70 12 68.4 13.8 68.4 15.4 C68.4 17 69.8 18.2 71.5 18.2 C73.2 18.2 74.6 17 74.6 15.4 C74.6 13.8 73 12 71.5 9.8 Z" fill="#2a8fe0"/>
<path d="M70 15 C70 16.3 70.8 17 71.5 17" stroke="#bfe3fa" stroke-width="0.8" fill="none"/>
<rect x="78.6" y="7.5" width="12" height="12.5" fill="#f8c70e"/>
<path d="M84.6 9.8 C83.1 12 81.5 13.8 81.5 15.2 C81.5 16.8 82.9 17.8 84.6 17.8 C86.3 17.8 87.7 16.8 87.7 15.2 C87.7 13.8 86.1 12 84.6 9.8 Z" fill="#e3672a"/>
<path d="M83 15 C83 16.2 83.8 16.8 84.4 16.8" stroke="#f8b48d" stroke-width="0.8" fill="none"/>
<path d="M29.3 29.3h8.7M29.3 31.2h8.7" stroke="#8a8a8a" stroke-width="0.9"/>
<path d="M29.5 33.8h2.5M33 33.8h2.5M36 33.8h2" stroke="#f2e21a" stroke-width="1.5"/>
<rect x="41.5" y="28" width="6" height="8" fill="#f0c4c4" stroke="#d0a0a0" stroke-width="0.5"/>
<rect x="43.2" y="29.5" width="7" height="7.2" fill="#e8d7a0" stroke="#c9b98b" stroke-width="0.5"/>
<path d="M44.8 35.5 L50.6 29.5" stroke="#e79a2a" stroke-width="1.4"/>
</svg><svg style="left:96px;top:40px" width="124" height="36">
<rect x="5.2" y="5" width="6" height="8" fill="#f2f2f2" stroke="#b9b9b9" stroke-width="0.6"/>
<rect x="8" y="7" width="6" height="7.5" fill="#e9e9e9" stroke="#b0b0b0" stroke-width="0.6"/>
<path d="M9.2 9h3.6M9.2 10.6h3.6M9.2 12.2h3.6" stroke="#c4c4c4" stroke-width="0.5"/>
<rect x="18" y="5.2" width="6" height="8.8" rx="0.5" fill="#e39a3c"/>
<rect x="20" y="4.5" width="2.4" height="1.6" fill="#8a6030"/>
<rect x="21" y="8" width="5.8" height="6.8" fill="#ececec" stroke="#adadad" stroke-width="0.5"/>
<path d="M33 5.6 L30.3 8.4 L33.2 11" fill="none" stroke="#2467c9" stroke-width="1.7"/>
<path d="M31 8.4 C34 6.6 38.5 6.6 39.5 9.2 C40 10.8 38.8 12.2 37.2 12.6" fill="none" stroke="#2f7be0" stroke-width="1.6"/>
<rect x="43.2" y="5.2" width="8.8" height="9" fill="#f7f7f7" stroke="#a9a9a9" stroke-width="0.7"/>
<path d="M47.6 5.2v9" stroke="#a9a9a9" stroke-width="0.6"/>
<path d="M61 5 L62.5 8 L60.5 10 L62 14" fill="none" stroke="#d6d6d6" stroke-width="0.6"/>
<path d="M82.5 5 L78.5 9 H80.8 V14.5 H84.2 V9 H86.5 Z" fill="#e2e2e2" stroke="#c4c4c4" stroke-width="0.6"/>
<path d="M99 6.5h10M99 13h10" stroke="#9a9a9a" stroke-width="0.8"/>
<rect x="99" y="9" width="10" height="2.5" fill="none" stroke="#a0a0a0" stroke-width="0.6"/>
<path d="M104 9v2.5M101.5 9v2.5M106.5 9v2.5" stroke="#a0a0a0" stroke-width="0.5"/>
<path d="M8.5 23.5 L11 29 M13.8 23.5 L11.2 29" stroke="#6e6e6e" stroke-width="0.9"/>
<circle cx="9.2" cy="30.8" r="1.8" fill="none" stroke="#ef9a2a" stroke-width="1.1"/>
<circle cx="13" cy="30.8" r="1.8" fill="none" stroke="#ef9a2a" stroke-width="1.1"/>
<path d="M18.6 23.8 L26.4 32 M26.4 23.8 L18.6 32" stroke="#e0242a" stroke-width="2.4" stroke-linecap="round"/>
<path d="M34 25 L39.8 25 L39.8 28 M30.5 31 C31 27 34 26 38 27" fill="none" stroke="#d2d2d2" stroke-width="1.6"/>
<rect x="44" y="24" width="3.5" height="3.5" fill="none" stroke="#d4d4d4" stroke-width="0.6"/>
<rect x="44" y="29" width="7.8" height="3.5" fill="none" stroke="#d4d4d4" stroke-width="0.6"/>
<rect x="56.5" y="23.5" width="9.5" height="5.5" fill="#f4f4f4" stroke="#9d9d9d" stroke-width="0.7"/>
<path d="M61.2 29v2.5M57 32.2h8.5" stroke="#9d9d9d" stroke-width="0.8"/>
<circle cx="83" cy="28" r="4.8" fill="none" stroke="#dedede" stroke-width="0.7"/>
<rect x="99.2" y="23.5" width="9.5" height="9" fill="none" stroke="#777" stroke-width="0.7" stroke-dasharray="1 1.2"/>
<path d="M103 29 L104 27 L105 29" stroke="#999" stroke-width="0.6" fill="none"/>
</svg><svg style="left:166.0px;top:48.5px" width="4" height="3"><path d="M0.4 0.5L2 2.1L3.6 0.5" fill="none" stroke="#555" stroke-width="1.15"/></svg><svg style="left:187.5px;top:48.5px" width="4" height="3"><path d="M0.4 0.5L2 2.1L3.6 0.5" fill="none" stroke="#555" stroke-width="1.15"/></svg><svg style="left:166.0px;top:67.0px" width="4" height="3"><path d="M0.4 0.5L2 2.1L3.6 0.5" fill="none" stroke="#555" stroke-width="1.15"/></svg><svg style="left:187.5px;top:67.0px" width="4" height="3"><path d="M0.4 0.5L2 2.1L3.6 0.5" fill="none" stroke="#555" stroke-width="1.15"/></svg><svg style="left:209.0px;top:67.0px" width="4" height="3"><path d="M0.4 0.5L2 2.1L3.6 0.5" fill="none" stroke="#555" stroke-width="1.15"/></svg><svg style="left:277.0px;top:48.5px" width="4" height="3"><path d="M0.4 0.5L2 2.1L3.6 0.5" fill="none" stroke="#555" stroke-width="1.15"/></svg><svg style="left:277.0px;top:67.0px" width="4" height="3"><path d="M0.4 0.5L2 2.1L3.6 0.5" fill="none" stroke="#555" stroke-width="1.15"/></svg><svg style="left:0;top:0" width="900" height="100">
<path d="M228.9 50.900000000000006 L225.5 54.300000000000004" stroke="#f0962a" stroke-width="1.8" stroke-linecap="round"/>
<circle cx="231.1" cy="48.7" r="3.4" fill="#dcedf9" stroke="#6a9cc4" stroke-width="0.9"/><path d="M231.1 46.6 L233.2 48.7 L231.1 50.8 L229 48.7 Z" fill="#12a02a"/>
<path d="M241.70000000000002 50.900000000000006 L238.3 54.300000000000004" stroke="#f0962a" stroke-width="1.8" stroke-linecap="round"/>
<circle cx="243.9" cy="48.7" r="3.4" fill="#dcedf9" stroke="#6a9cc4" stroke-width="0.9"/><rect x="241.9" y="48" width="4" height="1.5" fill="#e0242a"/>
<path d="M254.10000000000002 50.900000000000006 L250.70000000000002 54.300000000000004" stroke="#f0962a" stroke-width="1.8" stroke-linecap="round"/>
<circle cx="256.3" cy="48.7" r="3.4" fill="#dcedf9" stroke="#6a9cc4" stroke-width="0.9"/><path d="M254.9 50.5 L256.3 46.8 L257.7 50.5" fill="none" stroke="#2466c8" stroke-width="0.9"/>
<rect x="264.3" y="45" width="8.6" height="9" fill="none" stroke="#cfcfcf" stroke-width="0.6" stroke-dasharray="1 1"/>
<rect x="226" y="64.3" width="6.5" height="6.5" fill="none" stroke="#9a9a9a" stroke-width="0.6" stroke-dasharray="1 1"/>
<path d="M231 73 C231 69.5 235 69.5 235 73" fill="none" stroke="#9a9a9a" stroke-width="0.9"/>
<path d="M241.8 69.7 L238.4 73.1" stroke="#f0962a" stroke-width="1.8" stroke-linecap="round"/>
<circle cx="244" cy="67.5" r="3.4" fill="#dcedf9" stroke="#6a9cc4" stroke-width="0.9"/><path d="M241.5 71.5h5" stroke="#888" stroke-dasharray="1 0.8" stroke-width="0.6"/>
<path d="M254.10000000000002 69.7 L250.70000000000002 73.1" stroke="#f0962a" stroke-width="1.8" stroke-linecap="round"/>
<circle cx="256.3" cy="67.5" r="3.4" fill="#dcedf9" stroke="#6a9cc4" stroke-width="0.9"/>
<rect x="264.3" y="64.3" width="8.6" height="8" fill="none" stroke="#8a8a8a" stroke-width="0.6" stroke-dasharray="1 1"/>
<path d="M295 44.5 L302.5 50.5" stroke="#d2d2d2" stroke-width="0.7"/>
<rect x="302.8" y="46.7" width="10" height="6.6" rx="1" fill="#f7f7f7" stroke="#d2d2d2" stroke-width="0.8"/>
<path d="M305.5 50.2h4.5" stroke="#d8d8d8" stroke-dasharray="0.8 0.8" stroke-width="0.6"/>
<path d="M336.6 45.8V56.6M351.4 45.8V56.6M337 48h14" stroke="#c4c4c4" stroke-width="0.8"/>
<path d="M337.2 48 L339.4 47 V49 Z M350.8 48 L348.6 47 V49 Z" fill="#c4c4c4"/>
<rect x="372" y="64" width="10" height="8" fill="none" stroke="#d8d8d8" stroke-width="0.6"/>
<path d="M372 66.8h10M372 69.3h10M375 64v8M378.5 64v8" stroke="#d8d8d8" stroke-width="0.5"/>
<path d="M386.5 64 h4.5 l2 2 v6 h-6.5 z" fill="none" stroke="#d4d4d4" stroke-width="0.6"/>
<path d="M420.2 54.5 C418 51.5 416 49 416 46.3 A4.2 4.2 0 0 1 424.4 46.3 C424.4 49 422.4 51.5 420.2 54.5 Z" fill="#d3d3d3"/>
<circle cx="420.2" cy="46.2" r="1.6" fill="#f0f0f0"/>
<ellipse cx="420.2" cy="55.5" rx="4.8" ry="1.3" fill="none" stroke="#d6d6d6" stroke-width="0.9"/>
<path d="M447 43.5H454V53.5H460.5M447 48.7H451.5V56H460.5M458 45V52M458 57v1.5" fill="none" stroke="#a9893f" stroke-width="0.8"/>
<g fill="#f5a623" stroke="#8e8e8e" stroke-width="0.6">
<rect x="443.6" y="41.8" width="3.4" height="3.4"/><rect x="443.6" y="47" width="3.4" height="3.4"/><rect x="443.6" y="53.9" width="3.4" height="3.4"/><rect x="456.3" y="41.8" width="3.4" height="3.4"/>
</g>
<rect x="484" y="46.8" width="17.7" height="7" rx="1" fill="#b5b5b5"/>
<rect x="484" y="48.3" width="17.7" height="2" fill="#d4d4d4"/>
<path d="M485 46.8v7M500.7 46.8v7" stroke="#8f8f8f" stroke-width="0.9"/>
<circle cx="532.6" cy="49.8" r="6.2" fill="#c7c7c7"/>
<path d="M529 45 C531 47 531 53 529 55 M533 43.8 C535 47 535 53 533 56" stroke="#e2e2e2" stroke-width="0.8" fill="none"/>
<path d="M525.5 46 L527.5 44.5 M525.5 54 L527.5 55.5" stroke="#d2d2d2" stroke-width="1.4"/>
<rect x="561.8" y="41" width="9.6" height="2.6" rx="1" fill="#c2c2c2"/>
<path d="M563.6 43.6 H569.6 L568.8 57.5 H564.4 Z" fill="#d8d8d8" stroke="#c0c0c0" stroke-width="0.5"/>
<path d="M566.6 44v13" stroke="#eeeeee" stroke-width="0.8"/>
<rect x="581.5" y="40.3" width="18.5" height="17.8" fill="none" stroke="#cfcfcf" stroke-width="0.7" stroke-dasharray="1.2 1.2"/>
<circle cx="590.8" cy="45.6" r="3.6" fill="none" stroke="#c9c9c9" stroke-width="0.7"/>
<circle cx="590.8" cy="53" r="3.6" fill="none" stroke="#c9c9c9" stroke-width="0.7"/>
<path d="M621 43.8 H635 V55.5 H621 C617.5 55.5 616.2 52 616.2 49.6 C616.2 47 617.5 43.8 621 43.8 Z" fill="#f7f7f7" stroke="#cdcdcd" stroke-width="0.8"/>
<path d="M625 44v3M627 44v4M629 44v3" stroke="#cfcfcf" stroke-width="0.5"/>
<rect x="632" y="49" width="1.4" height="1.4" fill="#bdbdbd"/>
<rect x="656.6" y="40.2" width="14" height="4" rx="0.6" fill="#f7f7f7" stroke="#cbcbcb" stroke-width="0.7"/>
<path d="M657.4 44.2 H669.8 V52 C669.8 55 666.5 57.8 663.6 58.2 C660.7 57.8 657.4 55 657.4 52 Z" fill="#f7f7f7" stroke="#cbcbcb" stroke-width="0.7"/>
<circle cx="663.6" cy="50.5" r="3.8" fill="none" stroke="#d2d2d2" stroke-width="0.6"/>
<circle cx="663.6" cy="50.5" r="1.6" fill="none" stroke="#d2d2d2" stroke-width="0.6"/>
<ellipse cx="705.6" cy="48.8" rx="8.4" ry="6.8" fill="#f7f7f7" stroke="#cbcbcb" stroke-width="0.8"/>
<path d="M700 47 Q705.6 50 711.2 47 M705.6 44.5v6" stroke="#c9c9c9" stroke-width="0.7" fill="none"/>
<rect x="729.3" y="42" width="18.2" height="15" fill="#f7f7f7" stroke="#cbcbcb" stroke-width="0.8"/>
<path d="M735 43.5h6M736 45h4" stroke="#c8c8c8" stroke-width="0.6"/>
<circle cx="743" cy="53" r="0.8" fill="#b9b9b9"/>
<rect x="755.5" y="42.5" width="17" height="14" fill="#f7f7f7" stroke="#cbcbcb" stroke-width="0.8"/>
<rect x="757.3" y="44.3" width="8.5" height="10.4" fill="none" stroke="#d2d2d2" stroke-width="0.6"/>
<path d="M767.5 46h3.5M767.5 49h3.5M767.5 52h3.5" stroke="#c9c9c9" stroke-width="0.6"/>
<rect x="798.6" y="40.6" width="15.8" height="18" fill="#f7f7f7" stroke="#c5c5c5" stroke-width="0.8"/>
<path d="M798.6 43.2h15.8" stroke="#cfcfcf" stroke-width="0.6"/>
<rect x="809" y="41.4" width="4" height="1.2" fill="#bdbdbd"/>
<circle cx="806.5" cy="50.8" r="4.9" fill="none" stroke="#c6c6c6" stroke-width="0.8"/>
<circle cx="806.5" cy="50.8" r="3.2" fill="#d6d6d6"/>
<rect x="845.6" y="43.3" width="4.5" height="2.2" fill="#f4f4f4" stroke="#c5c5c5" stroke-width="0.7"/>
<rect x="856" y="43.3" width="4.5" height="2.2" fill="#f4f4f4" stroke="#c5c5c5" stroke-width="0.7"/>
<path d="M847.8 45.5v1.5M858.3 45.5v1.5" stroke="#c5c5c5" stroke-width="0.7"/>
<rect x="845" y="47" width="16" height="3.6" rx="1.5" fill="#f4f4f4" stroke="#c5c5c5" stroke-width="0.7"/>
<path d="M851.3 50.6 V56.5 H854 V50.6" fill="#f4f4f4" stroke="#c5c5c5" stroke-width="0.7"/>
</svg><div class="t" style="left:340.00px;top:40.50px;font-size:6.5px;line-height:6.5px;color:#c8c8c8;transform:scaleX(0.884);font-style:italic;">2.0</div><svg style="left:0;top:92px" width="640" height="20">
<rect x="22" y="6.5" width="8" height="9.5" fill="#f4f4f4" stroke="#bdbdbd" stroke-width="0.6"/>
<path d="M21.5 9.8 H27.5 L29.5 11 L27.5 12.2 H21.5 Z" fill="#e07a3a"/>
<rect x="29" y="10" width="2.5" height="2" fill="#222"/>
<path d="M92.5 15 L97 6.5 M94.5 15 L100 7" stroke="#777" stroke-width="0.8"/>
<path d="M96 15.5 L99.5 8" stroke="#e8a030" stroke-width="1.1"/>
<path d="M91.5 10.5 L95 9" stroke="#888" stroke-width="0.6"/>
<path d="M152.5 15 L157 6.5 M154.5 15 L160 7" stroke="#777" stroke-width="0.8"/>
<path d="M156 15.5 L159.5 8" stroke="#e8a030" stroke-width="1.1"/>
<rect x="207" y="6.5" width="8" height="9.5" fill="#f4f4f4" stroke="#c4c4c4" stroke-width="0.6"/>
<circle cx="212" cy="11" r="2.8" fill="#cfe4f5" stroke="#6a9cc4" stroke-width="0.8"/>
<path d="M210 13 L207.5 15.5" stroke="#e8962a" stroke-width="1.2"/>
<rect x="261" y="9.5" width="9.5" height="4.5" rx="0.6" fill="#5b6b7e"/>
<rect x="262.8" y="6.5" width="6" height="3.2" fill="#dfe5ec" stroke="#5b6b7e" stroke-width="0.5"/>
<rect x="262.5" y="13" width="6.5" height="3" fill="#f4f4f4" stroke="#5b6b7e" stroke-width="0.5"/>
<rect x="263" y="10.5" width="2" height="1" fill="#cfd8e2"/>
<path d="M317.5 8 H319.5 L321 13.5 H327 L328 9.5 H320" fill="none" stroke="#666" stroke-width="0.8"/>
<circle cx="322" cy="15.2" r="0.9" fill="#555"/><circle cx="326" cy="15.2" r="0.9" fill="#555"/>
<rect x="321.5" y="6" width="5" height="4.5" fill="#e03a3a"/>
<path d="M324 5 v2" stroke="#e03a3a" stroke-width="1"/>
</svg><svg style="left:0;top:92px" width="20" height="140">
<path d="M5.5 5.2h8.5" stroke="#2f80d6" stroke-width="1.6" stroke-dasharray="1.5 0.8"/>
<path d="M6.3 6.5v6M8.6 6.5v6M10.9 6.5v6M13.2 6.5v6" stroke="#a9a9a9" stroke-width="0.8"/>
<path d="M6.5 64.3 h6.5 M9 62.3 v4 M10.5 63 h2.5 v2.6 h-2.5" fill="none" stroke="#444" stroke-width="0.8"/>
<path d="M7 70 L12.5 77 M12.5 70 L7 77" stroke="#333" stroke-width="1"/>
<circle cx="10.1" cy="90.5" r="3.4" fill="#3a7fd8" stroke="#a5c8ea" stroke-width="1"/>
<rect x="9" y="89.4" width="2.2" height="2.2" fill="#cfe3f7" opacity="0.9"/>
<path d="M5.3 85.5 L7.3 87.5" stroke="#e8902a" stroke-width="1.2"/>
<path d="M6.5 120.8 h6.5 M9 118.8 v4 M10.5 119.5 h2.5 v2.6 h-2.5" fill="none" stroke="#444" stroke-width="0.8"/>
<path d="M7 125 L12.5 130.2 M12.5 125 L7 130.2" stroke="#333" stroke-width="1"/>
</svg><div class="t" style="left:13.4px;top:108.4px;font-size:7.5px;line-height:7.5px;color:#555;transform-origin:0 0;transform:rotate(90deg) scaleX(0.815)">Project browser</div><div class="t" style="left:13.4px;top:189px;font-size:7.5px;line-height:7.5px;color:#555;transform-origin:0 0;transform:rotate(90deg) scaleX(0.85)">Search</div><svg style="left:0;top:450px" width="640" height="24">
<rect x="19.5" y="7.8" width="19" height="12.8" fill="#e6e6e6" stroke="#c9c9c9" stroke-width="0.8"/>
<path d="M29 7.8v12.8" stroke="#c9c9c9" stroke-width="0.8"/>
<rect x="42" y="7.8" width="83" height="12.8" fill="#e6e6e6" stroke="#c9c9c9" stroke-width="0.8"/>
<path d="M52.4 7.8v12.8" stroke="#c9c9c9" stroke-width="0.8"/>
<path d="M24.3 10 L21.8 13 H23.4 V18.3 H25.3 V13 H26.9 Z" fill="#2a6fd0"/>
<path d="M34 18.3 L31.5 15.3 H33.1 V10 H35 V15.3 H36.6 Z" fill="#2a6fd0"/>
<path d="M43.8 10.3 H50.5 L48 13.5 V17.5 L46.5 18.5 V13.5 Z" fill="#5ab5e8"/>
<circle cx="49.3" cy="14.5" r="2.2" fill="#f6d21a"/>
<rect x="56" y="13" width="3" height="5.5" fill="#5b6f9a"/>
<rect x="59.5" y="11" width="2.5" height="7.5" fill="#7b8fb8"/>
<path d="M63 9.8 H66.5 M64.7 9.8 V18.5 M63 18.5 H66.5" stroke="#d4a21a" stroke-width="1.3"/>
<path d="M117.5 13 L120 15.3 L122.5 13" fill="none" stroke="#444" stroke-width="1.1"/>
</svg><div class="t" style="left:68.20px;top:460.73px;font-size:8px;line-height:8px;color:#333;transform:scaleX(0.848);">Visible storeys</div><svg style="left:0;top:450px" width="640" height="24">
<path d="M125.5 8 H168.5 L164.5 20.6 H125.5 Z" fill="#f9f9f9"/>
<path d="M169.0 14.5 L166.0 20.6" stroke="#bdbdbd" stroke-width="0.7"/>
<circle cx="129.8" cy="12.6" r="2.1" fill="#f7b81a"/><rect x="128.9" y="14.5" width="1.8" height="2.3" fill="#c9a040"/><circle cx="129.2" cy="12.0" r="0.7" fill="#fde9a0"/>
<path d="M169.5 8 H223 L219 20.6 H169.5 Z" fill="#f9f9f9"/>
<path d="M223.5 14.5 L220.5 20.6" stroke="#bdbdbd" stroke-width="0.7"/>
<circle cx="173.8" cy="12.6" r="2.1" fill="#f7b81a"/><rect x="172.9" y="14.5" width="1.8" height="2.3" fill="#c9a040"/><circle cx="173.2" cy="12.0" r="0.7" fill="#fde9a0"/>
<path d="M224 8 H277 L273 20.6 H224 Z" fill="#f9f9f9"/>
<path d="M277.5 14.5 L274.5 20.6" stroke="#bdbdbd" stroke-width="0.7"/>
<polygon points="228.60,10.40 229.66,12.54 232.02,12.89 230.31,14.56 230.72,16.91 228.60,15.80 226.48,16.91 226.89,14.56 225.18,12.89 227.54,12.54" fill="#f8c040" stroke="#d08a10" stroke-width="0.6"/>
<path d="M278 8 H344 L340 20.6 H278 Z" fill="#f9f9f9"/>
<path d="M344.5 14.5 L341.5 20.6" stroke="#bdbdbd" stroke-width="0.7"/>
<polygon points="282.60,10.40 283.66,12.54 286.02,12.89 284.31,14.56 284.72,16.91 282.60,15.80 280.48,16.91 280.89,14.56 279.18,12.89 281.54,12.54" fill="#f8c040" stroke="#d08a10" stroke-width="0.6"/>
<path d="M345 8 H409 L405 20.6 H345 Z" fill="#f9f9f9"/>
<path d="M409.5 14.5 L406.5 20.6" stroke="#bdbdbd" stroke-width="0.7"/>
<polygon points="349.60,10.40 350.66,12.54 353.02,12.89 351.31,14.56 351.72,16.91 349.60,15.80 347.48,16.91 347.89,14.56 346.18,12.89 348.54,12.54" fill="#f8c040" stroke="#d08a10" stroke-width="0.6"/>
<path d="M410 8 H461.5 L457.5 20.6 H410 Z" fill="#f9f9f9"/>
<path d="M462.0 14.5 L459.0 20.6" stroke="#bdbdbd" stroke-width="0.7"/>
<circle cx="414.3" cy="12.6" r="2.1" fill="#f7b81a"/><rect x="413.4" y="14.5" width="1.8" height="2.3" fill="#c9a040"/><circle cx="413.7" cy="12.0" r="0.7" fill="#fde9a0"/>
<path d="M462.5 8 H518 L514 20.6 H462.5 Z" fill="#f9f9f9"/>
<path d="M518.5 14.5 L515.5 20.6" stroke="#bdbdbd" stroke-width="0.7"/>
<polygon points="467.10,10.40 468.16,12.54 470.52,12.89 468.81,14.56 469.22,16.91 467.10,15.80 464.98,16.91 465.39,14.56 463.68,12.89 466.04,12.54" fill="#f8c040" stroke="#d08a10" stroke-width="0.6"/>
<path d="M519 8 H576 L572 20.6 H519 Z" fill="#fbd9bd"/>
<path d="M576.5 14.5 L573.5 20.6" stroke="#bdbdbd" stroke-width="0.7"/>
<circle cx="523.3" cy="12.6" r="2.1" fill="#f7b81a"/><rect x="522.4" y="14.5" width="1.8" height="2.3" fill="#c9a040"/><circle cx="522.7" cy="12.0" r="0.7" fill="#fde9a0"/>
<path d="M577 8 H620 L616 20.6 H577 Z" fill="#f9f9f9"/>
<path d="M620.5 14.5 L617.5 20.6" stroke="#bdbdbd" stroke-width="0.7"/>
<circle cx="581.3" cy="12.6" r="2.1" fill="#f7b81a"/><rect x="580.4" y="14.5" width="1.8" height="2.3" fill="#c9a040"/><circle cx="580.7" cy="12.0" r="0.7" fill="#fde9a0"/>
<path d="M622.8 13.3 L624.8 15.3 L626.8 13.3" fill="none" stroke="#555" stroke-width="1"/>
</svg><div class="t" style="left:134.50px;top:460.73px;font-size:8px;line-height:8px;color:#333;transform:scaleX(0.859);">Underlay</div><div class="t" style="left:177.60px;top:460.73px;font-size:8px;line-height:8px;color:#333;transform:scaleX(0.855);">Construction</div><div class="t" style="left:233.20px;top:460.73px;font-size:8px;line-height:8px;color:#333;transform:scaleX(0.867);">Convectional</div><div class="t" style="left:289.20px;top:460.73px;font-size:8px;line-height:8px;color:#333;transform:scaleX(0.867);">Rad.-floors,walls</div><div class="t" style="left:353.80px;top:460.73px;font-size:8px;line-height:8px;color:#333;transform:scaleX(0.872);">Loop drawings...</div><div class="t" style="left:419.00px;top:460.73px;font-size:8px;line-height:8px;color:#333;transform:scaleX(0.832);">Dry systems</div><div class="t" style="left:473.50px;top:460.73px;font-size:8px;line-height:8px;color:#333;transform:scaleX(0.864);">Water supply</div><div class="t" style="left:530.20px;top:460.73px;font-size:8px;line-height:8px;color:#222;font-weight:700;transform:scaleX(0.857);">Drainage (S)</div><div class="t" style="left:584.40px;top:460.73px;font-size:8px;line-height:8px;color:#333;transform:scaleX(0.881);">Printout</div><svg style="left:0;top:468px" width="100" height="38">
<path d="M29 5.5 L34.3 14.8 H23.7 Z" fill="#f8d030" stroke="#d9a400" stroke-width="0.6" stroke-linejoin="round"/>
<rect x="28.5" y="8.5" width="1" height="3.6" fill="#333"/>
<rect x="28.5" y="12.8" width="1" height="1" fill="#333"/>
<rect x="20" y="23" width="7" height="9" fill="#f4f4f4" stroke="#8a8a8a" stroke-width="0.7"/>
<path d="M21.5 22.6 h4" stroke="#555" stroke-width="1"/>
<circle cx="25.8" cy="29.8" r="2.6" fill="#e0242a"/>
<path d="M24.8 29.8 h2" stroke="#fff" stroke-width="0.8"/>
<path d="M68 27.8 h5 M70.5 26 v3.5 M68.8 26 h3.4 M70.5 29.5 v2" stroke="#444" stroke-width="0.9"/>
<path d="M73.8 25 L78.8 30.5 M78.8 25 L73.8 30.5" stroke="#333" stroke-width="1"/>
</svg><svg style="left:0;top:0" width="900" height="506">
<rect x="638" y="100" width="6.5" height="8" fill="#f4f4f4" stroke="#bbb" stroke-width="0.5"/><rect x="640" y="100" width="4.5" height="8" fill="#e8a0a0"/><path d="M641 108 L646 101.5" stroke="#f0b020" stroke-width="1.5"/>
<path d="M866.8 102.8 L869 105 L871.2 102.8" fill="none" stroke="#fff" stroke-width="1"/>
<path d="M876.5 101 h3 v4 h-3 z M876 105 h4 M878 105 v2.5" fill="none" stroke="#cfe4f8" stroke-width="0.9"/>
<path d="M886.3 101 L892 106.7 M892 101 L886.3 106.7" stroke="#fff" stroke-width="0.9"/>
<path d="M637.8 119.3 L640 121.5 L642.2 119.3" fill="none" stroke="#444" stroke-width="1.1"/>
<path d="M888.5 136 L891.3 133.2 L894.1 136" fill="none" stroke="#999" stroke-width="0.9"/>
<path d="M888.5 434 L891.3 436.8 L894.1 434" fill="none" stroke="#999" stroke-width="0.9"/>
<path d="M870.8 147.89999999999998 L872.8 149.89999999999998 L874.8 147.89999999999998" fill="none" stroke="#333" stroke-width="1.2"/>
<rect x="879.2" y="145.7" width="5.6" height="4.6" fill="#bfe6fa" stroke="#2aa0e0" stroke-width="1"/>
<rect x="883.2" y="145.29999999999998" width="2.8" height="6" fill="#2aa0e0"/>
<path d="M880.5 151.7 h3.5" stroke="#2c6fa8" stroke-width="1"/>
<path d="M870.8 161.79999999999998 L872.8 163.79999999999998 L874.8 161.79999999999998" fill="none" stroke="#333" stroke-width="1.2"/>
<rect x="879.2" y="159.6" width="5.6" height="4.6" fill="#bfe6fa" stroke="#2aa0e0" stroke-width="1"/>
<rect x="883.2" y="159.2" width="2.8" height="6" fill="#2aa0e0"/>
<path d="M880.5 165.6 h3.5" stroke="#2c6fa8" stroke-width="1"/>
<rect x="879.2" y="186.25" width="5.6" height="4.6" fill="#bfe6fa" stroke="#2aa0e0" stroke-width="1"/>
<rect x="883.2" y="185.85" width="2.8" height="6" fill="#2aa0e0"/>
<path d="M880.5 192.25 h3.5" stroke="#2c6fa8" stroke-width="1"/>
<path d="M880 207.15 L885.5 200.85" stroke="#e8a81e" stroke-width="2"/><path d="M879.8 207.35 l0.8 -1.6 l0.9 0.8 z" fill="#444"/><path d="M885 200.35 l1 1" stroke="#e07a7a" stroke-width="1.5"/>
<rect x="879.2" y="214.05" width="5.6" height="4.6" fill="#bfe6fa" stroke="#2aa0e0" stroke-width="1"/>
<rect x="883.2" y="213.65" width="2.8" height="6" fill="#2aa0e0"/>
<path d="M880.5 220.05 h3.5" stroke="#2c6fa8" stroke-width="1"/>
<rect x="879.2" y="227.95000000000002" width="5.6" height="4.6" fill="#bfe6fa" stroke="#2aa0e0" stroke-width="1"/>
<rect x="883.2" y="227.55" width="2.8" height="6" fill="#2aa0e0"/>
<path d="M880.5 233.95000000000002 h3.5" stroke="#2c6fa8" stroke-width="1"/>
<rect x="879.2" y="241.85000000000002" width="5.6" height="4.6" fill="#bfe6fa" stroke="#2aa0e0" stroke-width="1"/>
<rect x="883.2" y="241.45000000000002" width="2.8" height="6" fill="#2aa0e0"/>
<path d="M880.5 247.85000000000002 h3.5" stroke="#2c6fa8" stroke-width="1"/>
<path d="M870.8 284.59999999999997 L872.8 286.59999999999997 L874.8 284.59999999999997" fill="none" stroke="#333" stroke-width="1.2"/>
<rect x="879.2" y="282.4" width="5.6" height="4.6" fill="#bfe6fa" stroke="#2aa0e0" stroke-width="1"/>
<rect x="883.2" y="281.99999999999994" width="2.8" height="6" fill="#2aa0e0"/>
<path d="M880.5 288.4 h3.5" stroke="#2c6fa8" stroke-width="1"/>
<path d="M870.8 298.49999999999994 L872.8 300.49999999999994 L874.8 298.49999999999994" fill="none" stroke="#333" stroke-width="1.2"/>
<rect x="879.2" y="296.29999999999995" width="5.6" height="4.6" fill="#bfe6fa" stroke="#2aa0e0" stroke-width="1"/>
<rect x="883.2" y="295.8999999999999" width="2.8" height="6" fill="#2aa0e0"/>
<path d="M880.5 302.29999999999995 h3.5" stroke="#2c6fa8" stroke-width="1"/>
<rect x="879.2" y="310.19999999999993" width="5.6" height="4.6" fill="#bfe6fa" stroke="#2aa0e0" stroke-width="1"/>
<rect x="883.2" y="309.7999999999999" width="2.8" height="6" fill="#2aa0e0"/>
<path d="M880.5 316.19999999999993 h3.5" stroke="#2c6fa8" stroke-width="1"/>
<path d="M870.8 326.2999999999999 L872.8 328.2999999999999 L874.8 326.2999999999999" fill="none" stroke="#333" stroke-width="1.2"/>
<path d="M870.8 352.9499999999999 L872.8 354.9499999999999 L874.8 352.9499999999999" fill="none" stroke="#333" stroke-width="1.2"/>
<rect x="879.2" y="350.7499999999999" width="5.6" height="4.6" fill="#bfe6fa" stroke="#2aa0e0" stroke-width="1"/>
<rect x="883.2" y="350.34999999999985" width="2.8" height="6" fill="#2aa0e0"/>
<path d="M880.5 356.7499999999999 h3.5" stroke="#2c6fa8" stroke-width="1"/>
</svg><div class="t" style="left:871.00px;top:213.55px;font-size:7.5px;line-height:7.5px;color:#555;transform:scaleX(0.794);">%</div><div class="t" style="left:871.00px;top:227.45px;font-size:7.5px;line-height:7.5px;color:#555;transform:scaleX(0.794);">%</div><div class="t" style="left:871.00px;top:241.35px;font-size:7.5px;line-height:7.5px;color:#555;transform:scaleX(0.794);">%</div><div class="t" style="left:871.50px;top:268.00px;font-size:7.5px;line-height:7.5px;color:#666;transform:scaleX(0.960);">m</div><div class="t" style="left:866.50px;top:309.70px;font-size:7.5px;line-height:7.5px;color:#555;transform:scaleX(1.168);">[−]</div><div class="a" style="left:775px;top:198.5px;width:0.8px;height:9px;background:#111"></div>
</body></html>
